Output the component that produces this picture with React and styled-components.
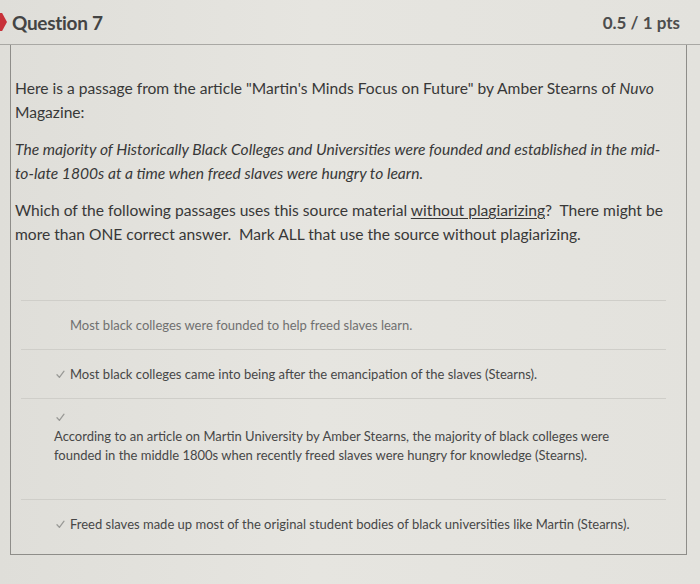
import React from "react";
import styled, { createGlobalStyle } from "styled-components";

const GlobalStyle = createGlobalStyle`
  html, body {
    margin: 0;
    padding: 0;
    background: #e2e1dc;
  }
  body {
    font-family: "Lato", "Liberation Sans", sans-serif;
    color: #3a3a3a;
  }
`;

const Page = styled.div`
  width: 700px;
  height: 584px;
  overflow: hidden;
  background: linear-gradient(90deg, #dfded9 0%, #e6e5e0 45%, #e3e2dd 100%);
`;

const Header = styled.div`
  display: flex;
  align-items: center;
  height: 44px;
  padding-right: 20px;
  border-bottom: 1px solid #a9a8a4;
`;

const Marker = styled.span`
  width: 7px;
  height: 18px;
  margin-right: 5px;
  background: #c8323a;
  clip-path: polygon(0 0, 30% 0, 100% 50%, 30% 100%, 0 100%);
`;

const Title = styled.h2`
  flex: 1;
  margin: 0;
  font-size: 19px;
  font-weight: 700;
  color: #444;
  letter-spacing: -0.3px;
`;

const Points = styled.span`
  font-size: 17px;
  font-weight: 700;
  color: #4d4d4d;
`;

const Card = styled.div`
  margin-left: 10px;
  width: 677px;
  height: 510px;
  box-sizing: border-box;
  border: 1px solid #8e8d89;
  border-top: none;
  padding: 32px 0 0;
`;

const Body = styled.div`
  padding: 0 22px 0 4px;
`;

const Para = styled.p`
  margin: 0 0 14px;
  font-size: 15.6px;
  line-height: 23.5px;
  color: #383838;
  font-style: ${(p) => (p.$italic ? "italic" : "normal")};
`;

const Under = styled.span`
  text-decoration: underline;
  text-underline-offset: 2px;
`;

const Answers = styled.div`
  margin: 54px 20px 0 10px;
  border-top: 1px solid #cfcec9;
`;

const Answer = styled.div`
  display: flex;
  flex-direction: ${(p) => (p.$stacked ? "column" : "row")};
  align-items: ${(p) => (p.$stacked ? "flex-start" : "center")};
  padding: ${(p) => (p.$stacked ? "14px 0 34px 33px" : "15px 0 14px 35px")};
  border-bottom: ${(p) => (p.$last ? "none" : "1px solid #cfcec9")};
`;

const Check = styled.span`
  display: inline-flex;
  width: 9px;
  height: 9px;
  margin-right: ${(p) => (p.$stacked ? "0" : "5px")};
  margin-left: ${(p) => (p.$stacked ? "2px" : "0")};
  margin-bottom: ${(p) => (p.$stacked ? "5px" : "0")};
  color: #9a9a97;
`;

const Spacer = styled.span`
  width: 14px;
`;

const AnswerText = styled.span`
  font-size: 13px;
  line-height: 19px;
  color: ${(p) => (p.$dim ? "#707070" : "#474747")};
`;

const Tick = ({ stacked }) => (
  <Check $stacked={stacked}>
    <svg width="9" height="9" viewBox="0 0 9 9" fill="none">
      <path d="M1 4.8 L3.4 7.4 L8 1.2" stroke="currentColor" strokeWidth="1.3" strokeLinecap="round" strokeLinejoin="round" />
    </svg>
  </Check>
);

export default function App() {
  return (
    <Page>
      <GlobalStyle />
      <Header>
        <Marker />
        <Title>Question 7</Title>
        <Points>0.5 / 1 pts</Points>
      </Header>
      <Card>
        <Body>
          <Para>
            Here is a passage from the article "Martin's Minds Focus on Future" by Amber Stearns of <i>Nuvo</i> Magazine:
          </Para>
          <Para $italic>
            The majority of Historically Black Colleges and Universities were founded and established in the mid-to-late 1800s at a time when freed slaves were hungry to learn.
          </Para>
          <Para>
            Which of the following passages uses this source material <Under>without plagiarizing</Under>?&nbsp; There might be more than ONE correct answer.&nbsp; Mark ALL that use the source without plagiarizing.
          </Para>
        </Body>
        <Answers>
          <Answer>
            <Spacer />
            <AnswerText $dim>Most black colleges were founded to help freed slaves learn.</AnswerText>
          </Answer>
          <Answer>
            <Tick />
            <AnswerText>Most black colleges came into being after the emancipation of the slaves (Stearns).</AnswerText>
          </Answer>
          <Answer $stacked>
            <Tick stacked />
            <AnswerText>
              According to an article on Martin University by Amber Stearns, the majority of black colleges were
              <br />
              founded in the middle 1800s when recently freed slaves were hungry for knowledge (Stearns).
            </AnswerText>
          </Answer>
          <Answer $last>
            <Tick />
            <AnswerText>Freed slaves made up most of the original student bodies of black universities like Martin (Stearns).</AnswerText>
          </Answer>
        </Answers>
      </Card>
    </Page>
  );
}
